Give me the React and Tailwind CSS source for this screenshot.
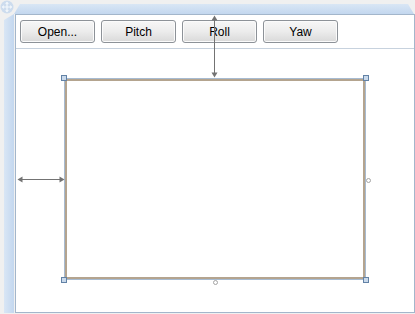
import { useState } from "react";

const botones = ["Open...", "Pitch", "Roll", "Yaw"];

function IconoMover() {
  return (
    <svg width="14" height="14" viewBox="0 0 14 14">
      <circle cx="7" cy="7" r="6.5" fill="#cddcee" />
      <path d="M7 2.5v9M2.5 7h9" stroke="#f4f8fc" strokeWidth="1.2" />
      <path d="M7 1.8l-2 2h4zM7 12.2l-2-2h4zM1.8 7l2-2v4zM12.2 7l-2-2v4z" fill="#f4f8fc" />
    </svg>
  );
}

function Manija({ className }) {
  return (
    <div className={`absolute w-[6px] h-[6px] bg-[#c9d9eb] border border-[#6282a6] ${className}`} />
  );
}

function Punto({ className }) {
  return (
    <div className={`absolute w-[5px] h-[5px] rounded-full bg-white border border-[#a4a4a4] ${className}`} />
  );
}

export default function App() {
  const [activo, setActivo] = useState(null);

  return (
    <div className="w-[415px] h-[314px] bg-[#f0f0f0] flex flex-col overflow-hidden font-['Liberation_Sans',Arial,sans-serif]">
      {/* regla superior */}
      <div className="flex h-[14px] shrink-0">
        <div className="w-[14px] h-[14px] shrink-0">
          <IconoMover />
        </div>
        <div className="flex-1 pt-[4px] pr-[1px]">
          <div className="h-[10px] bg-linear-to-b from-[#d9e6f5] to-[#c3d7ef] [clip-path:polygon(0_100%,6px_0,calc(100%-6px)_0,100%_100%)]" />
        </div>
      </div>

      <div className="flex flex-1 pb-[1px]">
        {/* regla izquierda */}
        <div className="w-[15px] shrink-0 pl-[4px] pr-[1px]">
          <div className="h-full bg-linear-to-r from-[#d9e6f5] to-[#c3d7ef] [clip-path:polygon(0_6px,100%_0,100%_100%,0_100%)]" />
        </div>

        {/* lienzo */}
        <div className="flex-1 flex flex-col bg-white border border-[#a3b6cb] relative">
          <div className="flex gap-[6px] pl-[4px] pt-[5px] pb-[5px] border-b border-[#c7d2de]">
            {botones.map((b) => (
              <button
                key={b}
                onClick={() => setActivo(b)}
                className={`w-[75px] h-[23px] rounded-[3px] border border-[#8d9298] bg-linear-to-b from-[#f7f7f7] via-[#ececec] to-[#d9d9d9] shadow-[inset_0_0_0_1px_#fbfbfb] text-[12px] text-black leading-none ${
                  activo === b ? "border-[#3c7fb1]" : ""
                }`}
              >
                {b}
              </button>
            ))}
          </div>

          <div className="flex-1 pl-[48px] pt-[29px]">
            <div className="relative w-[302px] h-[202px] border border-[#a7bbd1]">
              <div className="h-full border-2 border-[#b4a48f]" />
              <Manija className="-left-[4px] -top-[4px]" />
              <Manija className="-right-[4px] -top-[4px]" />
              <Manija className="-left-[4px] -bottom-[4px]" />
              <Manija className="-right-[4px] -bottom-[4px]" />
              <Punto className="-right-[6px] top-[99px]" />
              <Punto className="left-[148px] -bottom-[6px]" />
            </div>
          </div>

          {/* flecha vertical */}
          <svg className="absolute left-[194px] top-0" width="9" height="63" viewBox="0 0 9 63">
            <path d="M4.5 4v55" stroke="#737373" strokeWidth="1" />
            <path d="M4.5 0.5l-3 5h6z" fill="#737373" />
            <path d="M4.5 62.5l-3-5h6z" fill="#737373" />
          </svg>

          {/* flecha horizontal */}
          <svg className="absolute left-[1px] top-[160px]" width="48" height="9" viewBox="0 0 48 9">
            <path d="M4 4.5h40" stroke="#737373" strokeWidth="1" />
            <path d="M0.5 4.5l5-3v6z" fill="#737373" />
            <path d="M47.5 4.5l-5-3v6z" fill="#737373" />
          </svg>
        </div>
      </div>
    </div>
  );
}
